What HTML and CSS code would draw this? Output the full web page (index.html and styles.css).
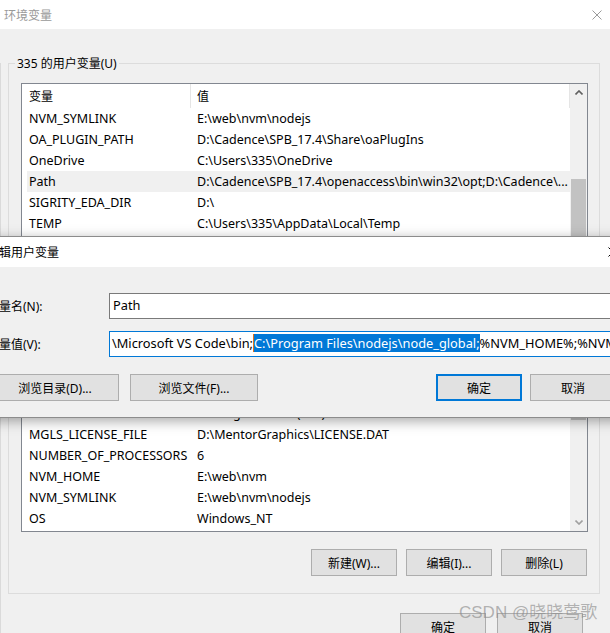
FILE: index.html
```html
<!DOCTYPE html>
<html lang="zh-CN">
<head>
  <meta charset="UTF-8" />
  <title>环境变量</title>
  <link rel="stylesheet" href="styles.css">
</head>
<body>

  <!-- 环境变量 窗口 -->
  <div class="window">
    <div class="titlebar">
      <span class="title">环境变量</span>
      <svg class="close-icon" width="10" height="10" viewBox="0 0 10 10" aria-hidden="true">
        <path d="M0.5 0.5L9.5 9.5M9.5 0.5L0.5 9.5" stroke="#9a9a9a" stroke-width="1" fill="none"/>
      </svg>
    </div>

    <div class="window-body">

      <!-- 用户变量 -->
      <div class="group group-user">
        <div class="group-label">335 的用户变量(U)</div>
        <div class="listbox listbox-user">
          <div class="list">
            <div class="list-head">
              <span class="col-name">变量</span>
              <span class="col-value">值</span>
            </div>
            <div class="row"><span class="col-name">NVM_SYMLINK</span><span class="col-value">E:\web\nvm\nodejs</span></div>
            <div class="row"><span class="col-name">OA_PLUGIN_PATH</span><span class="col-value">D:\Cadence\SPB_17.4\Share\oaPlugIns</span></div>
            <div class="row"><span class="col-name">OneDrive</span><span class="col-value">C:\Users\335\OneDrive</span></div>
            <div class="row row-selected"><span class="col-name">Path</span><span class="col-value">D:\Cadence\SPB_17.4\openaccess\bin\win32\opt;D:\Cadence\...</span></div>
            <div class="row"><span class="col-name">SIGRITY_EDA_DIR</span><span class="col-value">D:\</span></div>
            <div class="row"><span class="col-name">TEMP</span><span class="col-value">C:\Users\335\AppData\Local\Temp</span></div>
            <div class="row"><span class="col-name">TMP</span><span class="col-value">C:\Users\335\AppData\Local\Temp</span></div>
          </div>
          <div class="scrollbar">
            <div class="scroll-arrow">
              <svg width="8" height="5" viewBox="0 0 8 5" aria-hidden="true"><path d="M0.5 4.5L4 1L7.5 4.5" stroke="#606060" stroke-width="1.6" fill="none"/></svg>
            </div>
            <div class="scroll-track"><div class="scroll-thumb thumb-user"></div></div>
            <div class="scroll-arrow">
              <svg width="8" height="5" viewBox="0 0 8 5" aria-hidden="true"><path d="M0.5 0.5L4 4L7.5 0.5" stroke="#606060" stroke-width="1.6" fill="none"/></svg>
            </div>
          </div>
        </div>
        <div class="group-buttons">
          <button class="btn">新建(N)...</button>
          <button class="btn">编辑(E)...</button>
          <button class="btn">删除(D)</button>
        </div>
      </div>

      <!-- 系统变量 -->
      <div class="group group-system">
        <div class="group-label">系统变量(S)</div>
        <div class="listbox listbox-system">
          <div class="list">
            <div class="list-head">
              <span class="col-name">变量</span>
              <span class="col-value">值</span>
            </div>
            <div class="row"><span class="col-name">INCLUDE</span><span class="col-value">C:\Program Files (x86)\Mentor\include</span></div>
            <div class="row"><span class="col-name">MGLS_LICENSE_FILE</span><span class="col-value">D:\MentorGraphics\LICENSE.DAT</span></div>
            <div class="row"><span class="col-name">NUMBER_OF_PROCESSORS</span><span class="col-value">6</span></div>
            <div class="row"><span class="col-name">NVM_HOME</span><span class="col-value">E:\web\nvm</span></div>
            <div class="row"><span class="col-name">NVM_SYMLINK</span><span class="col-value">E:\web\nvm\nodejs</span></div>
            <div class="row"><span class="col-name">OS</span><span class="col-value">Windows_NT</span></div>
            <div class="row"><span class="col-name">Path</span><span class="col-value">C:\Windows\system32</span></div>
          </div>
          <div class="scrollbar">
            <div class="scroll-arrow">
              <svg width="8" height="5" viewBox="0 0 8 5" aria-hidden="true"><path d="M0.5 4.5L4 1L7.5 4.5" stroke="#a0a0a0" stroke-width="1.6" fill="none"/></svg>
            </div>
            <div class="scroll-track"><div class="scroll-thumb thumb-system"></div></div>
            <div class="scroll-arrow">
              <svg width="8" height="5" viewBox="0 0 8 5" aria-hidden="true"><path d="M0.5 0.5L4 4L7.5 0.5" stroke="#a0a0a0" stroke-width="1.6" fill="none"/></svg>
            </div>
          </div>
        </div>
        <div class="group-buttons">
          <button class="btn">新建(W)...</button>
          <button class="btn">编辑(I)...</button>
          <button class="btn">删除(L)</button>
        </div>
      </div>

      <div class="window-buttons">
        <button class="btn">确定</button>
        <button class="btn">取消</button>
      </div>
    </div>
  </div>

  <!-- 编辑用户变量 对话框 -->
  <div class="dialog" role="dialog" aria-labelledby="dialogTitle">
    <div class="dialog-titlebar">
      <span class="dialog-title" id="dialogTitle">编辑用户变量</span>
      <span class="dialog-close">
        <svg width="10" height="10" viewBox="0 0 10 10" aria-hidden="true">
          <path d="M0.5 0.5L9.5 9.5M9.5 0.5L0.5 9.5" stroke="#000" stroke-width="1" fill="none"/>
        </svg>
      </span>
    </div>
    <div class="dialog-body">
      <div class="field">
        <span class="field-label">变量名(N):</span>
        <div class="textbox">Path</div>
      </div>
      <div class="field">
        <span class="field-label">变量值(V):</span>
        <div class="textbox textbox-focus">\Microsoft VS Code\bin;<span class="sel">C:\Program Files\nodejs\node_global;</span>%NVM_HOME%;%NVM_SYMLINK%</div>
      </div>
      <div class="dialog-buttons">
        <div class="btn-group">
          <button class="btn btn-wide">浏览目录(D)...</button>
          <button class="btn btn-wide">浏览文件(F)...</button>
        </div>
        <div class="btn-group btn-group-right">
          <button class="btn btn-default">确定</button>
          <button class="btn">取消</button>
        </div>
      </div>
    </div>
  </div>

  <div class="watermark">CSDN @晓晓莺歌</div>

</body>
</html>
```

FILE: styles.css
```css
* {
  box-sizing: border-box;
}

body {
  margin: 0;
  width: 610px;
  height: 633px;
  overflow: hidden;
  position: relative;
  background: #f0f0f0;
  font-family: "Noto Sans", "Noto Sans CJK SC", sans-serif;
  font-size: 12px;
  color: #000;
}

/* 主窗口 */
.titlebar {
  height: 29px;
  background: #fff;
  display: flex;
  align-items: center;
  justify-content: space-between;
  padding-left: 4px;
}

.title {
  color: #999;
}

.close-icon {
  margin-right: 8px;
}

.window-body {
  border-left: 1px solid #dadada;
  padding: 0 10px 0 7px;
}

.group {
  border: 1px solid #dcdcdc;
  padding: 0 11px 17px 12px;
}

.group-user {
  margin-top: 34px;
}

.group-system {
  margin-top: 15px;
}

.group-label {
  width: fit-content;
  margin: -9px 0 11px -6px;
  padding: 0 2px;
  line-height: 17px;
  background: #f0f0f0;
}

/* 列表 */
.listbox {
  display: flex;
  border: 1px solid #828790;
  background: #fff;
}

.listbox-user {
  height: 198px;
}

.listbox-system {
  height: 154px;
}

.list {
  flex: 1;
  min-width: 0;
  padding-left: 5px;
  overflow: hidden;
}

.list-head,
.row {
  display: flex;
  white-space: nowrap;
}

.list-head {
  height: 24px;
}

.list-head span {
  display: flex;
  align-items: center;
  border-right: 1px solid #e5e5e5;
}

.row {
  height: 21px;
  align-items: center;
  font-size: 12.5px;
}

.row-selected {
  background: #f0f0f0;
}

.col-name {
  flex: none;
  width: 164px;
  padding-left: 2px;
  overflow: hidden;
}

.col-value {
  flex: 1;
  padding-left: 6px;
  overflow: hidden;
}

/* 滚动条 */
.scrollbar {
  flex: none;
  width: 17px;
  background: #f0f0f0;
  display: flex;
  flex-direction: column;
}

.scroll-arrow {
  height: 17px;
  display: flex;
  align-items: center;
  justify-content: center;
}

.scroll-track {
  flex: 1;
}

.scroll-thumb {
  margin: 0 1px;
  background: #c2c2c2;
}

.thumb-user {
  margin-top: 78px;
  height: 72px;
}

.thumb-system {
  height: 24px;
}

/* 按钮 */
.btn {
  width: 86px;
  height: 27px;
  padding: 0;
  border: 1px solid #adadad;
  background: #e1e1e1;
  font: inherit;
  color: #000;
}

.btn-wide {
  width: 128px;
}

.btn-default {
  border: 2px solid #0078d7;
}

.group-buttons {
  display: flex;
  justify-content: flex-end;
  gap: 9px;
  margin: 17px 1px 0 0;
}

.window-buttons {
  display: flex;
  justify-content: flex-end;
  gap: 11px;
  margin: 19px 17px 0 0;
}

/* 编辑对话框 */
.dialog {
  position: absolute;
  top: 236px;
  left: -20px;
  width: 657px;
  border: 1px solid #8c8c8c;
  background: #f0f0f0;
  box-shadow: 0 3px 12px rgba(0, 0, 0, 0.35);
}

.dialog-titlebar {
  height: 30px;
  background: #fff;
  display: flex;
  align-items: center;
  justify-content: space-between;
  padding-left: 6px;
}

.dialog-close {
  width: 46px;
  height: 30px;
  display: flex;
  align-items: center;
  justify-content: center;
}

.dialog-body {
  padding: 26px 20px 16px 10px;
}

.field {
  display: grid;
  grid-template-columns: 118px 1fr;
  align-items: center;
}

.field + .field {
  margin-top: 12px;
}

.field-label {
  margin-left: -4px;
  white-space: nowrap;
}

.textbox {
  height: 26px;
  border: 1px solid #7a7a7a;
  background: #fff;
  padding: 0 3px;
  font-size: 12.8px;
  line-height: 22px;
  white-space: nowrap;
  overflow: hidden;
}

.textbox-focus {
  border-color: #0078d7;
  padding-left: 2px;
}

.sel {
  background: #0078d7;
  color: #fff;
  border-left: 1px solid #e0701c;
}

.dialog-buttons {
  display: flex;
  justify-content: space-between;
  margin-top: 17px;
}

.btn-group {
  display: flex;
  gap: 11px;
}

.btn-group-right {
  gap: 8px;
}

.watermark {
  position: absolute;
  left: 459px;
  top: 601px;
  font-family: "Liberation Sans", "Noto Sans CJK SC", sans-serif;
  font-size: 17px;
  line-height: 24px;
  color: rgba(140, 140, 140, 0.65);
  white-space: nowrap;
}
```
